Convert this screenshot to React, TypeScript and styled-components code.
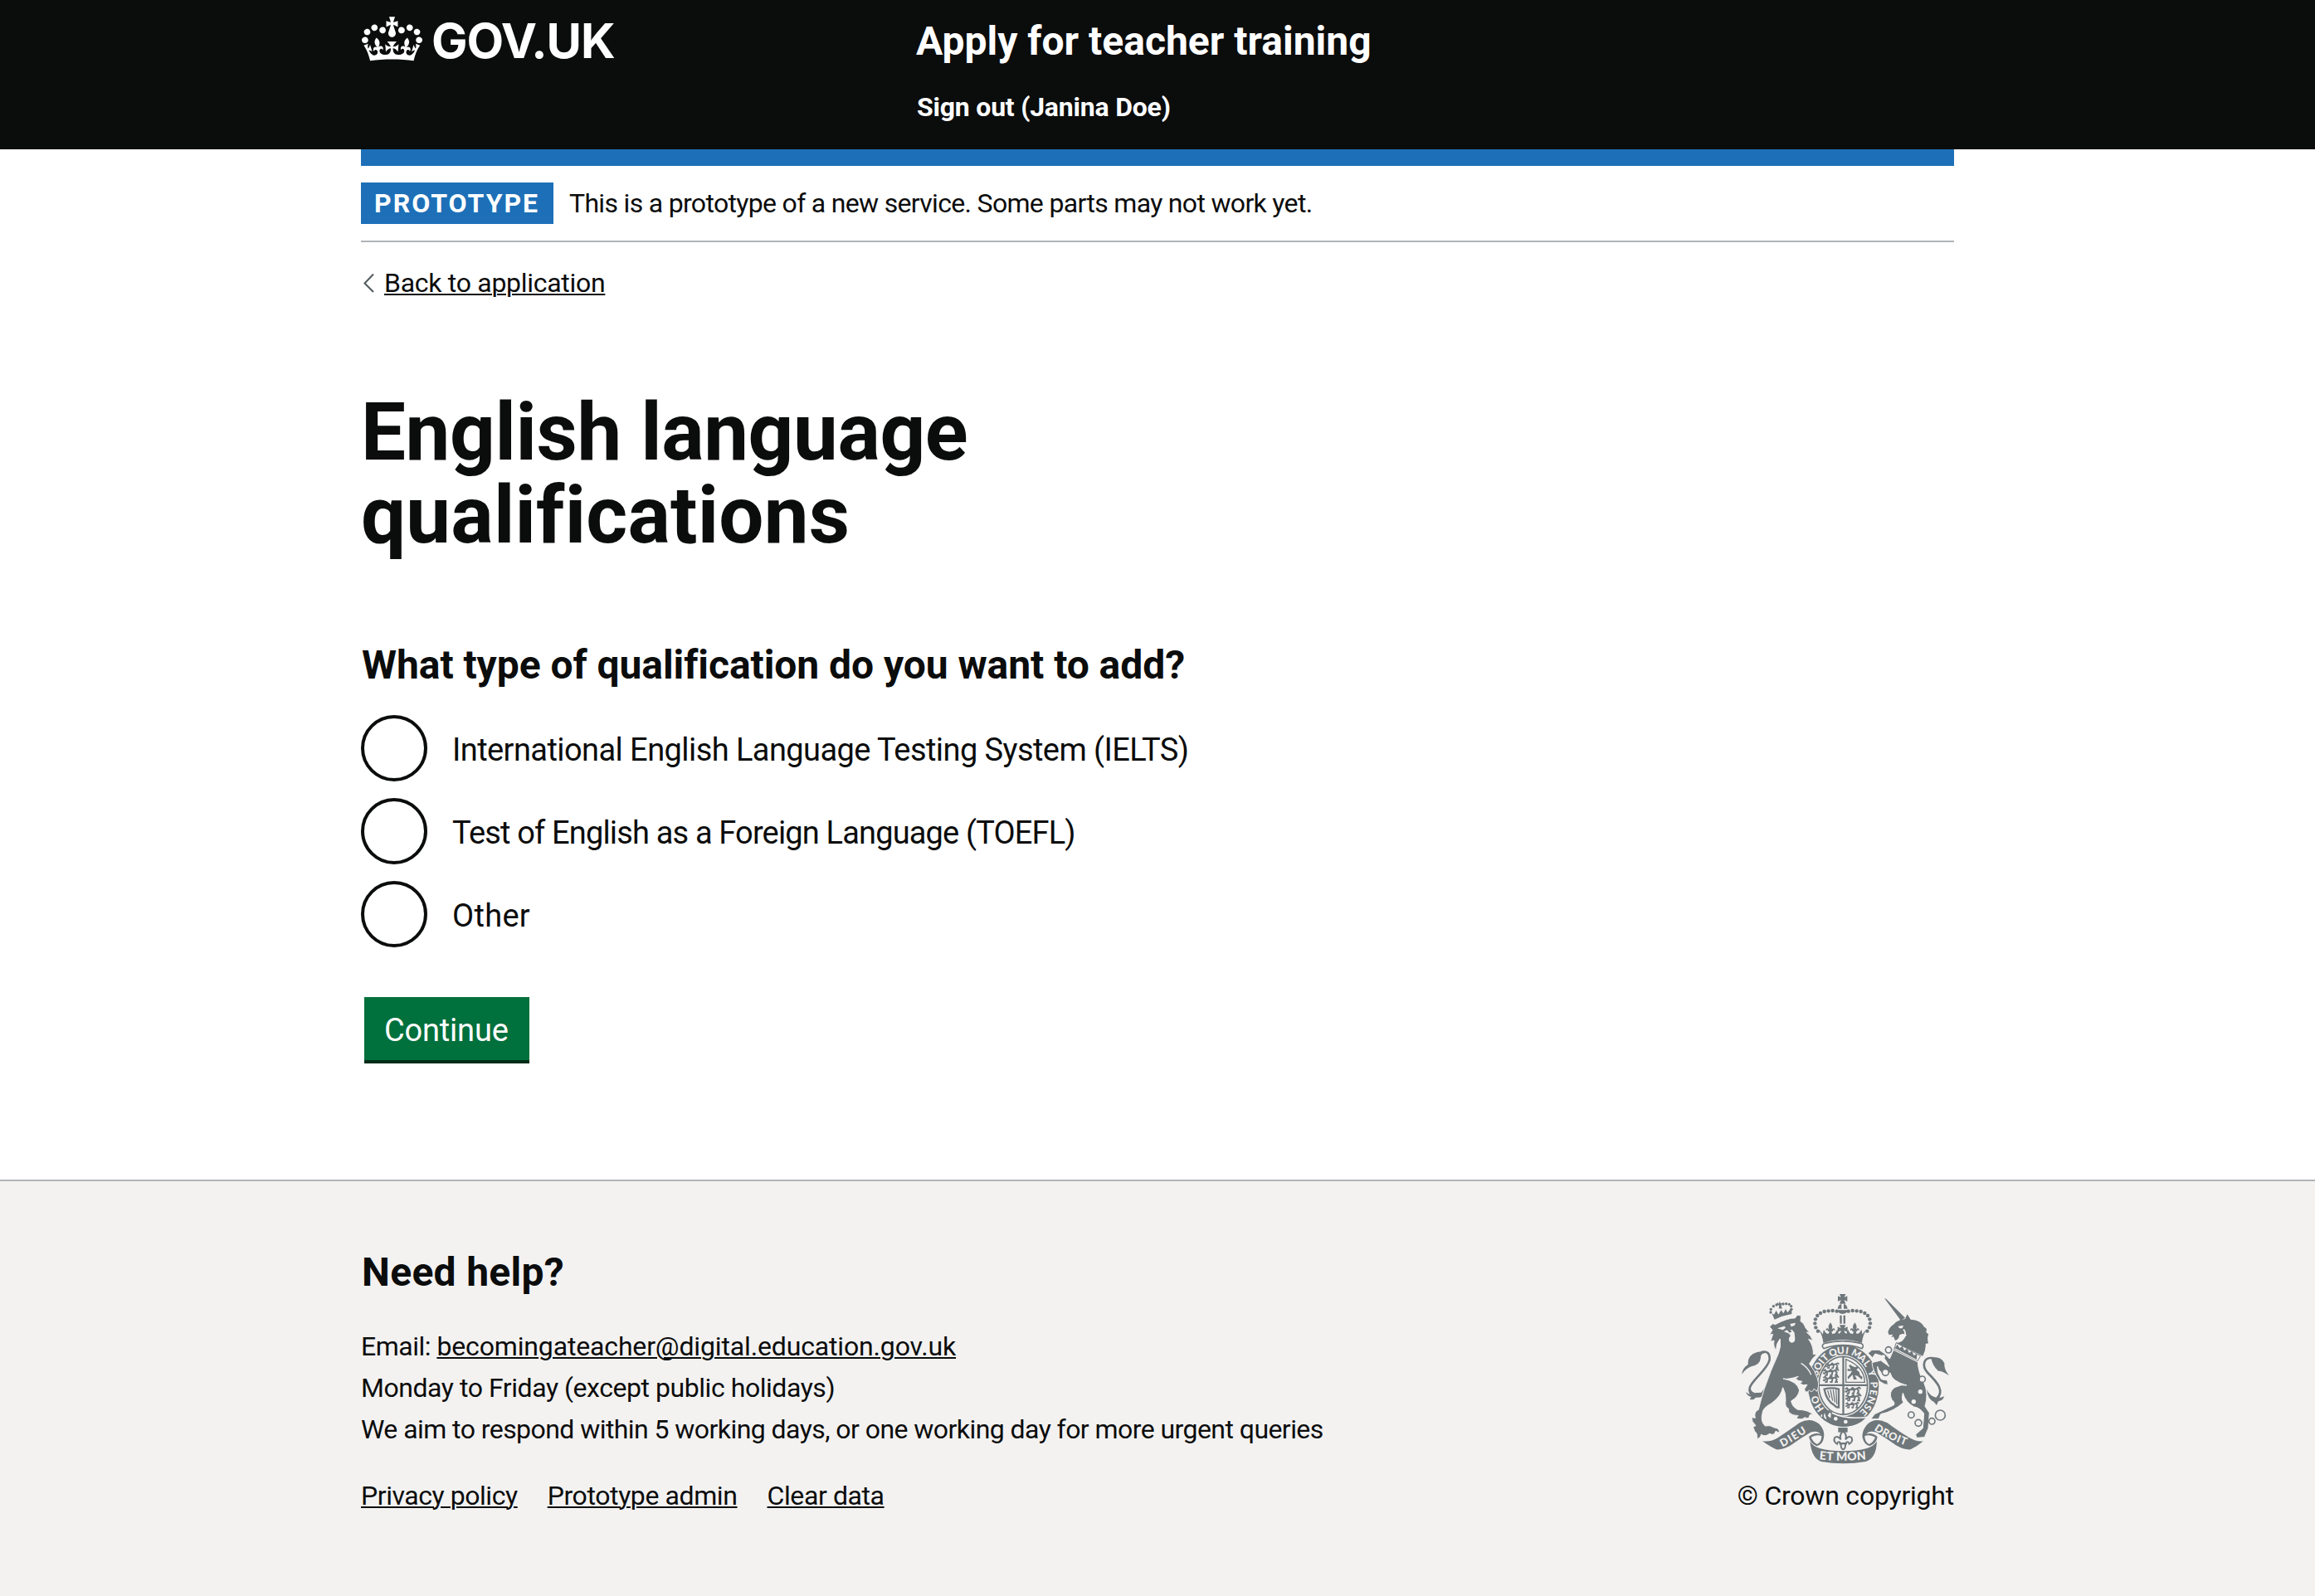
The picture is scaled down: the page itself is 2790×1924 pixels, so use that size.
import React, { useState } from 'react';
import styled, { createGlobalStyle } from 'styled-components';

const ink = '#0b0c0c';
const blue = '#1d70b8';
const midGrey = '#b1b4b6';
const lightGrey = '#f3f2f1';
const crestGrey = '#6f777b';

const GlobalStyle = createGlobalStyle`
  *, *::before, *::after { box-sizing: border-box; }
  html { background: ${lightGrey}; }
  body {
    margin: 0;
    color: ${ink};
    background: #fff;
    font-family: Roboto, "Liberation Sans", sans-serif;
    font-size: 32px;
    line-height: 50px;
  }
  h1, h2, p, ul, fieldset { margin: 0; padding: 0; border: 0; }
`;

const Page = styled.div`
  display: flex;
  flex-direction: column;
  min-height: 1924px;
`;

const Container = styled.div`
  width: 1920px;
  margin: 0 auto;
`;

const Tracked = styled.span<{ $ls: number }>`
  letter-spacing: ${p => p.$ls}px;
`;

const Link = styled.a<{ $ls?: number }>`
  color: ${ink};
  letter-spacing: ${p => p.$ls ?? 0}px;
  text-decoration: underline;
  text-decoration-thickness: 2px;
  text-underline-offset: 2px;
`;

/* Header */
const HeaderBar = styled.header`
  height: 180px;
  background: ${ink};
  color: #fff;
`;

const HeaderInner = styled(Container)`
  display: grid;
  grid-template-columns: 669px 1fr;
`;

const Logo = styled.a`
  display: flex;
  align-items: flex-start;
  gap: 11px;
  padding: 20px 0 0 1px;
  color: #fff;
`;

const Wordmark = styled.span`
  margin-top: -1px;
  font-family: Inter, sans-serif;
  font-size: 58px;
  line-height: 60px;
  font-weight: 700;
  letter-spacing: -1.1px;
`;

const HeaderContent = styled.div`
  display: flex;
  flex-direction: column;
  gap: 29px;
  padding-top: 20px;
  font-weight: 700;
`;

const ServiceName = styled.span`
  font-size: 48px;
  line-height: 60px;
`;

const SignOut = styled.span`
  padding-left: 1px;
  line-height: 40px;
  letter-spacing: -0.21px;
`;

/* Phase banner */
const PhaseBanner = styled.div`
  display: flex;
  align-items: center;
  gap: 19px;
  height: 112px;
  border-top: 20px solid ${blue};
  border-bottom: 2px solid ${midGrey};
`;

const Tag = styled.strong`
  width: 232px;
  padding-left: 16px;
  background: ${blue};
  color: #fff;
  font-weight: 700;
  letter-spacing: 2px;
`;

const BackRow = styled.div`
  display: flex;
  align-items: center;
  gap: 12px;
  height: 40px;
  margin-top: 29px;
  padding-left: 3px;
`;

/* Form */
const PageTitle = styled.h1`
  margin-top: 110px;
  font-size: 96px;
  line-height: 100px;
`;

const SectionTitle = styled.h2<{ $ls: number }>`
  padding-left: 1px;
  font-size: 48px;
  line-height: 60px;
  letter-spacing: ${p => p.$ls}px;
`;

const Form = styled.form`
  display: flex;
  flex-direction: column;
  align-items: flex-start;
  margin-top: 101px;
`;

const RadioList = styled.div`
  display: flex;
  flex-direction: column;
  gap: 20px;
  margin-top: 30px;
`;

const RadioRow = styled.label`
  display: flex;
  align-items: center;
  gap: 30px;
  height: 80px;
  font-size: 38px;
`;

const RadioInput = styled.input`
  appearance: none;
  width: 80px;
  height: 80px;
  margin: 0;
  border: 4px solid ${ink};
  border-radius: 50%;
  background: #fff;
  &:checked { box-shadow: inset 0 0 0 16px #fff; background: ${ink}; }
`;

const RadioLabel = styled.span<{ $ls: number }>`
  padding-top: 3px;
  letter-spacing: ${p => p.$ls}px;
`;

const Button = styled.button`
  width: 199px;
  height: 76px;
  margin: 60px 0 0 4px;
  padding: 3px 0 0 24px;
  border: 0;
  background: #00703c;
  box-shadow: 0 4px 0 #002d18;
  color: #fff;
  font: inherit;
  font-size: 38px;
  text-align: left;
  letter-spacing: -0.19px;
`;

/* Footer */
const FooterBar = styled.footer`
  flex: 1;
  margin-top: 144px;
  border-top: 2px solid ${midGrey};
  background: ${lightGrey};
`;

const FooterInner = styled(Container)`
  display: flex;
  justify-content: space-between;
  padding-top: 80px;
`;

const HelpText = styled.div`
  display: flex;
  flex-direction: column;
  margin: 34px 0 30px;
`;

const FooterLinks = styled.div`
  display: flex;
  gap: 36px;
`;

const Copyright = styled.div`
  display: flex;
  flex-direction: column;
  align-items: flex-end;
  padding-top: 55px;
`;

const CrestBox = styled.div`
  width: 250px;
  height: 206px;
  margin: 0 6px 13px 0;
`;

const Crown = () => (
  <svg width="73" height="54" viewBox="0 0 132 97" fill="currentColor" aria-hidden="true">
    <path d="M25 30.2c3.5 1.5 7.7-.2 9.1-3.7 1.5-3.6-.2-7.8-3.9-9.2-3.6-1.4-7.6.3-9.1 3.9-1.4 3.5.3 7.5 3.9 9zM9 39.5c3.6 1.5 7.8-.2 9.2-3.7 1.5-3.6-.2-7.8-3.9-9.1-3.6-1.5-7.6.2-9.1 3.8-1.4 3.5.3 7.5 3.8 9zM4.4 57.2c3.5 1.5 7.7-.2 9.1-3.8 1.5-3.6-.2-7.7-3.9-9.1-3.5-1.5-7.6.3-9.1 3.8-1.4 3.5.3 7.6 3.9 9.1zm38.3-21.4c3.5 1.5 7.7-.2 9.1-3.8 1.5-3.6-.2-7.7-3.9-9.1-3.6-1.5-7.6.3-9.1 3.8-1.3 3.6.4 7.7 3.9 9.1zm64.4-5.6c-3.6 1.5-7.8-.2-9.1-3.7-1.5-3.6.2-7.8 3.8-9.2 3.6-1.4 7.7.3 9.2 3.9 1.3 3.5-.4 7.5-3.9 9zm15.9 9.3c-3.6 1.5-7.7-.2-9.1-3.7-1.5-3.6.2-7.8 3.7-9.1 3.6-1.5 7.7.2 9.2 3.8 1.5 3.5-.3 7.5-3.8 9zm4.7 17.7c-3.6 1.5-7.8-.2-9.2-3.8-1.5-3.6.2-7.7 3.9-9.1 3.6-1.5 7.7.3 9.2 3.8 1.3 3.5-.4 7.6-3.9 9.1zM89.3 35.8c-3.6 1.5-7.8-.2-9.2-3.8-1.4-3.6.2-7.7 3.9-9.1 3.6-1.5 7.7.3 9.2 3.8 1.4 3.6-.3 7.7-3.9 9.1zM69.7 17.7l8.9 4.7V9.3l-8.9 2.8c-.2-.3-.5-.6-.9-.9L72.4 0H59.6l3.5 11.2c-.3.3-.6.5-.9.9l-8.8-2.8v13.1l8.8-4.7c.3.3.6.7.9.9l-5 15.4v.1c-.2.8-.4 1.6-.4 2.4 0 4.1 3.1 7.5 7 8.1h.2c.3 0 .7.1 1 .1.4 0 .7 0 1-.1h.2c4-.6 7.1-4.1 7.1-8.1 0-.8-.1-1.7-.4-2.4V34l-5.1-15.4c.4-.2.7-.6 1-.9zM66 92.8c16.9 0 32.8 1.1 47.1 3.2 4-16.9 8.9-26.7 14-33.5l-9.6-3.4c1 4.9 1.1 7.2 0 10.2-1.5-1.4-3-4.3-4.2-8.7L108.6 76c2.8-2 5-3.2 7.5-3.3-4.4 9.4-10 11.9-13.6 11.2-4.3-.8-6.3-4.6-5.6-7.9 1-4.7 5.7-5.9 8-.5 4.3-8.7-3-11.4-7.6-8.8 7.1-7.2 7.9-13.5 2.1-21.1-8 6.1-8.1 12.3-4.5 20.8-4.7-5.4-12.1-2.5-9.5 6.2 3.4-5.2 7.9-2 7.2 3.1-.6 4.3-6.4 7.8-13.5 7.2-10.3-.9-10.9-8-11.2-13.8 2.5-.5 7.1 1.8 11 7.3L80.2 60c-4.1 4.4-8 5.3-12.3 5.4 1.4-4.4 8-11.6 8-11.6H55.5s6.4 7.2 7.9 11.6c-4.2-.1-8-1-12.3-5.4l1.4 16.4c3.9-5.5 8.5-7.7 10.9-7.3-.3 5.8-.9 12.8-11.1 13.8-7.2.6-12.9-2.9-13.5-7.2-.7-5 3.8-8.3 7.1-3.1 2.7-8.7-4.6-11.6-9.4-6.2 3.7-8.5 3.6-14.7-4.6-20.8-5.8 7.6-5 13.9 2.2 21.1-4.7-2.6-11.9.1-7.7 8.8 2.3-5.5 7.1-4.2 8.1.5.7 3.3-1.3 7.1-5.7 7.9-3.5.7-9-1.8-13.5-11.2 2.5.1 4.7 1.3 7.5 3.3l-4.7-15.4c-1.2 4.4-2.7 7.2-4.3 8.7-1.1-3-.9-5.3 0-10.2l-9.5 3.4c5 6.9 9.9 16.7 14 33.5 14.8-2.1 30.8-3.2 47.7-3.2z" />
  </svg>
);

const garter: [string, number][] = [
  ['H', -128], ['O', -113], ['S', -68], ['O', -56], ['I', -46], ['T', -37],
  ['Q', -20], ['U', -5], ['I', 7], ['M', 25], ['A', 39], ['L', 51], ['Y', 69],
  ['P', 88], ['E', 101], ['N', 114], ['S', 127], ['E', 138],
];

const GarterMotto = () => (
  <g fill={lightGrey} fontFamily="Lato, sans-serif" fontWeight={900} fontSize={35} textAnchor="middle">
    {garter.map(([ch, deg], i) => {
      const t = (deg * Math.PI) / 180;
      const x = 425 + 110 * Math.sin(t);
      const y = 392 - 128 * Math.cos(t);
      const turn = (Math.atan2(128 * Math.sin(t), 110 * Math.cos(t)) * 180) / Math.PI;
      return <text key={i} transform={`translate(${x} ${y}) rotate(${turn})`} y={12}>{ch}</text>;
    })}
  </g>
);

const crownBeads = [
  [401, 122], [386, 120], [371, 121], [356, 123], [342, 129], [331, 138], [324, 151], [322, 166], [325, 181], [333, 194],
];

const Fleur = ({ x, y, s = 1 }: { x: number; y: number; s?: number }) => (
  <path
    transform={`translate(${x} ${y}) scale(${s})`}
    d="M0-24C8-14 9-6 4 2C10-6 18-4 16 6C12 1 9 3 9 8L4 8L8 20H-8L-4 8L-9 8C-9 3-12 1-16 6C-18-4-10-6-4 2C-9-6-8-14 0-24Z"
  />
);

const Passant = ({ x, y, s = 1 }: { x: number; y: number; s?: number }) => (
  <path
    transform={`translate(${x} ${y}) scale(${s})`}
    fill="none"
    stroke={crestGrey}
    strokeWidth={6}
    d="M-29-4L-22-8L-18-2L6-3L14-6L20 2L16 11H24M-18-2L-24 5L-30 4M-14 0L-16 11H-23M5-2L2 11H-5M-8-3L-2-9L4-5M14-6L22-10L27-5"
  />
);

const RoyalArms = () => (
  <svg width="250" height="206" viewBox="57 57 750 618" fill={crestGrey} role="img" aria-label="Royal coat of arms">
    {/* imperial crown */}
    <path d="M411 60H433L428 72L439 67V87L428 81L433 95H411L416 81L405 87V67L416 72Z" />
    <path d="M404 113Q406 98 418 96V113ZM426 96Q438 98 440 113H426ZM403 118H441Q439 131 422 132Q405 131 403 118Z" />
    <path d="M412 137H419V167H412ZM425 137H432V167H425Z" />
    {crownBeads.map(([x, y]) => (
      <React.Fragment key={x + y * 7}>
        <circle cx={x} cy={y} r={6.6} />
        <circle cx={844 - x} cy={y} r={6.6} />
      </React.Fragment>
    ))}
    <path d="M336 188Q345 196 350 206L354 188Q362 206 370 203Q378 210 388 203Q396 206 402 188L408 203Q416 202 416 192L404 198V178L416 184L411 172H433L428 184L440 178V198L428 192Q428 202 436 203L442 188Q448 206 456 203Q466 210 474 203Q482 206 490 188L494 206Q499 196 508 188Q494 212 492 236Q422 214 352 236Q350 212 336 188Z" />
    <Fleur x={378} y={187} />
    <Fleur x={466} y={187} />
    <path d="M357 238Q422 222 488 238Q502 245 492 257Q425 232 354 257Q342 247 357 238Z" fill={lightGrey} stroke={crestGrey} strokeWidth={5} />

    {/* garter and shield */}
    <ellipse cx="425" cy="392" rx="128" ry="148" />
    <ellipse cx="424" cy="391" rx="94" ry="111" fill={lightGrey} />
    <ellipse cx="424" cy="391" rx="88" ry="105" fill="none" stroke={crestGrey} strokeWidth={5} />
    <path d="M421 287H428V497H421ZM336 386H512V393H336Z" />
    <Passant x={386} y={318} s={0.85} />
    <Passant x={381} y={342} />
    <Passant x={381} y={367} />
    <Passant x={460} y={408} />
    <Passant x={462} y={434} />
    <Passant x={458} y={461} s={0.85} />
    <path d="M434 296V379H502Q502 325 434 296Z" fill="none" stroke={crestGrey} strokeWidth={4} />
    <path d="M444 318Q452 312 456 320L468 325Q476 318 480 326L472 334Q486 342 484 352L494 360L492 370L476 356L466 354L474 368L462 370L458 352L442 368L440 360L452 346L456 338L440 338V330L452 332Z" />
    <path d="M356 404Q384 396 408 404V470Q398 470 392 462Q364 446 356 404Z" fill="none" stroke={crestGrey} strokeWidth={7} />
    <path d="M368 408L376 436M378 406L386 446M388 406L394 452M398 406L401 458" stroke={crestGrey} strokeWidth={4} fill="none" />
    <GarterMotto />
    <path d="M344 498Q420 542 530 508" fill="none" stroke={lightGrey} strokeWidth={8} />
    <circle cx="368" cy="500" r="17" fill={lightGrey} stroke={crestGrey} strokeWidth={6} />
    <path d="M355 480L378 482L368 500L384 514L366 518L360 500Z" />
    <path d="M380 494Q430 520 504 510Q470 545 405 537L378 524Z" />
    <path d="M384 490Q436 516 520 504" fill="none" stroke={lightGrey} strokeWidth={5} />
    <circle cx="397" cy="511" r="7" fill={lightGrey} />
    <circle cx="433" cy="522" r="7" fill={lightGrey} />

    {/* lion */}
    <path d="M57 350Q62 325 80 315Q78 290 98 276Q125 262 146 272Q124 274 126 290Q124 315 92 322Q72 330 57 350Z" />
    <path d="M128 270Q160 262 158 298C150 335 92 372 86 400Q86 418 102 420" fill="none" stroke={crestGrey} strokeWidth={8} />
    <path d="M72 414L86 424L80 404L98 418L128 416L140 400V424Q130 436 108 434Q100 446 86 440L92 432Q78 430 72 414Z" />
    <path
      d="M158 178L170 167L178 170Q225 145 250 147L258 136L272 138L270 158Q284 166 288 182L303 200L292 198Q310 212 314 229L299 223Q318 250 316 278L330 277Q312 292 302 312Q322 335 331 365Q340 395 328 412L319 402Q312 420 302 408Q288 422 284 404L294 388Q280 392 268 384L276 376Q262 376 252 366L262 358Q225 370 207 366Q258 375 266 408Q262 432 236 447Q240 468 260 478Q300 478 316 498L304 496Q300 516 286 506Q272 518 254 508L262 500Q240 500 228 488L226 474Q212 468 216 445Q218 420 206 398Q200 430 165 455Q132 472 132 492Q124 520 142 537Q160 532 175 543Q194 544 194 562L180 556Q175 574 158 565Q142 578 128 568Q126 582 112 584Q116 565 104 556L98 540L108 536Q92 520 93 506L106 508Q100 485 118 478Q128 435 140 400Q160 340 190 275Q200 250 196 222Q180 240 182 264Q170 250 174 228L161 232L170 205L158 208L168 190Z"
      stroke={lightGrey}
      strokeWidth={3}
    />
    <path d="M186 184L212 176L216 182L206 190ZM232 168L252 164L248 174L236 178ZM210 196Q224 184 240 190L248 200L250 222Q250 236 238 236Q226 234 228 220L234 210L226 202Z" fill={lightGrey} />
    <path d="M220 188Q232 184 238 196L230 200Z" />
    <path d="M272 310Q300 328 308 352" stroke={lightGrey} strokeWidth={4} fill="none" />
    {[[162, 126], [163, 115], [172, 104], [183, 99], [207, 96], [218, 95], [229, 97], [236, 104], [237, 115]].map(([x, y]) => (
      <circle key={x} cx={x} cy={y} r={5} />
    ))}
    <path d="M186 90L192 95L194 86L198 94L206 92L200 100L203 113L191 112L193 101L184 99Z" />
    <path d="M166 130L174 134L182 120L190 134L200 118L208 130L216 114L223 127L233 114L238 116L238 132Q204 138 176 152Z" />

    {/* unicorn */}
    <path d="M573 75L580 78L648 146L632 155Z" />
    <path d="M586 198Q590 180 606 170Q622 152 648 150L656 133L668 152Q705 154 716 178L726 186L724 198L733 206Q726 215 732 238L722 240Q724 262 712 284L614 236Q632 238 654 208Q642 200 628 208Q626 224 612 228L606 214L598 216L604 206L590 208Z" />
    <path d="M622 176L642 174L638 184L628 184Z" fill={lightGrey} />
    <path d="M642 188Q654 200 644 218Q634 234 620 234" stroke={lightGrey} strokeWidth={5} fill="none" />
    <path d="M616 236L704 284L692 303L608 260Z" fill={lightGrey} stroke={crestGrey} strokeWidth={3} />
    <path d="M611 256L620 242L628 256L638 248L645 264L656 257L662 273L673 266L679 282L691 276L690 297Z" />
    <path d="M606 262L694 306Q696 345 716 380Q734 420 720 466L736 490L732 545L718 578L690 580L686 568L712 545L716 492Q700 470 680 468Q650 452 640 418Q634 440 642 452Q606 485 560 494L552 512H524L538 494L606 462Q614 455 600 442Q586 415 610 398Q635 385 654 390Q600 376 594 345L562 344Q552 336 548 322Q546 345 562 368L584 372L586 388L574 386L556 376Q530 335 528 308L560 300L590 322Q580 300 566 284L540 276L530 290L514 274L528 262L554 262Q574 272 592 294Z" stroke={lightGrey} strokeWidth={3} />
    <path d="M750 292C715 285 706 320 730 345C765 380 792 410 762 440" fill="none" stroke={crestGrey} strokeWidth={8} />
    <path d="M742 288Q780 285 790 310Q788 332 807 355Q785 338 768 338Q745 318 742 288Z" />
    <path d="M726 405Q738 430 760 434L774 418L772 436L790 430Q784 446 768 448L762 462L752 450Q730 440 726 405Z" />
    {[[588, 262, 11], [577, 343, 12], [710, 368, 11], [670, 497, 11], [696, 526, 12], [745, 520, 11], [775, 498, 18]].map(([x, y, r]) => (
      <circle key={x} cx={x} cy={y} r={r} fill={lightGrey} stroke={crestGrey} strokeWidth={5} />
    ))}
    <circle cx="703" cy="413" r="8" fill={lightGrey} />
    <circle cx="679" cy="449" r="8" fill={lightGrey} />
    <circle cx="569" cy="287" r="7" fill={lightGrey} />

    {/* motto ribbon */}
    <path d="M132 592Q165 595 188 580Q236 548 266 526Q305 504 338 530Q360 555 354 580Q350 605 328 610Q305 600 300 576Q318 560 342 566Q330 552 306 560Q268 582 236 606Q208 624 182 622Q160 612 132 592Z" />
    <path d="M308 578Q326 566 346 573Q346 596 330 603Q314 594 308 578Z" fill={lightGrey} />
    <path d="M714 592Q690 595 664 580Q612 548 584 526Q540 504 512 530Q490 555 494 580Q500 605 520 610Q545 600 548 576Q530 560 508 566Q518 552 544 560Q582 582 614 606Q642 624 668 622Q690 612 714 592Z" />
    <path d="M540 578Q522 566 502 573Q502 596 518 603Q534 594 540 578Z" fill={lightGrey} />
    <path d="M304 592Q320 628 425 628Q528 628 546 592Q544 655 505 666Q425 680 345 666Q310 655 304 592Z" />
    <path id="dieu" d="M204 613Q254 588 320 540" fill="none" />
    <path id="etmon" d="M338 658Q424 668 530 655" fill="none" />
    <path id="droit" d="M535 551Q586 588 680 618" fill="none" />
    <g fill={lightGrey} fontFamily="Lato, sans-serif" fontWeight={900}>
      <text fontSize={38}><textPath href="#dieu" textLength={104}>DIEU</textPath></text>
      <text fontSize={42}><textPath href="#etmon" textLength={170}>ET MON</textPath></text>
      <text fontSize={38}><textPath href="#droit" textLength={128}>DROIT</textPath></text>
    </g>
    <path d="M406 543H440V560H406Z" />
    <path d="M424 556Q440 570 432 586Q444 570 455 580Q460 594 446 602Q444 592 436 596L432 606Q432 620 424 622Q416 620 416 606L412 596Q404 592 402 602Q388 594 393 580Q404 570 416 586Q408 570 424 556Z" fill={lightGrey} stroke={crestGrey} strokeWidth={6} />
    <path d="M410 597H438V604H410Z" />
  </svg>
);

const options = [
  { id: 'ielts', label: 'International English Language Testing System (IELTS)', ls: -0.57 },
  { id: 'toefl', label: 'Test of English as a Foreign Language (TOEFL)', ls: -0.84 },
  { id: 'other', label: 'Other', ls: 0.3 },
];

export default function App() {
  const [choice, setChoice] = useState('');
  return (
    <Page>
      <GlobalStyle />
      <HeaderBar>
        <HeaderInner>
          <Logo><Crown /><Wordmark>GOV.UK</Wordmark></Logo>
          <HeaderContent>
            <ServiceName>Apply for teacher training</ServiceName>
            <SignOut>Sign out (Janina Doe)</SignOut>
          </HeaderContent>
        </HeaderInner>
      </HeaderBar>
      <Container as="main">
        <PhaseBanner>
          <Tag>PROTOTYPE</Tag>
          <Tracked $ls={-0.68}>This is a prototype of a new service. Some parts may not work yet.</Tracked>
        </PhaseBanner>
        <BackRow>
          <svg width="13" height="24" viewBox="0 0 13 24" fill="none" stroke="#505a5f" strokeWidth="2" aria-hidden="true">
            <path d="M12 1.5L1.5 12.5L12 23" />
          </svg>
          <Link $ls={-0.29}>Back to application</Link>
        </BackRow>
        <PageTitle>
          <Tracked $ls={-0.4}>English language</Tracked>
          <br />
          <Tracked $ls={0.2}>qualifications</Tracked>
        </PageTitle>
        <Form onSubmit={e => e.preventDefault()}>
          <SectionTitle $ls={-0.06}>What type of qualification do you want to add?</SectionTitle>
          <RadioList>
            {options.map(o => (
              <RadioRow key={o.id}>
                <RadioInput type="radio" name="type" checked={choice === o.id} onChange={() => setChoice(o.id)} />
                <RadioLabel $ls={o.ls}>{o.label}</RadioLabel>
              </RadioRow>
            ))}
          </RadioList>
          <Button>Continue</Button>
        </Form>
      </Container>
      <FooterBar>
        <FooterInner>
          <div>
            <SectionTitle $ls={0.3}>Need help?</SectionTitle>
            <HelpText>
              <span><Tracked $ls={-0.5}>Email: </Tracked><Link $ls={-0.15}>becomingateacher@digital.education.gov.uk</Link></span>
              <Tracked $ls={-0.45}>Monday to Friday (except public holidays)</Tracked>
              <Tracked $ls={-0.56}>We aim to respond within 5 working days, or one working day for more urgent queries</Tracked>
            </HelpText>
            <FooterLinks>
              <Link $ls={-0.45}>Privacy policy</Link>
              <Link $ls={-0.4}>Prototype admin</Link>
              <Link $ls={-0.4}>Clear data</Link>
            </FooterLinks>
          </div>
          <Copyright>
            <CrestBox><RoyalArms /></CrestBox>
            <Tracked $ls={-0.22}>© Crown copyright</Tracked>
          </Copyright>
        </FooterInner>
      </FooterBar>
    </Page>
  );
}
